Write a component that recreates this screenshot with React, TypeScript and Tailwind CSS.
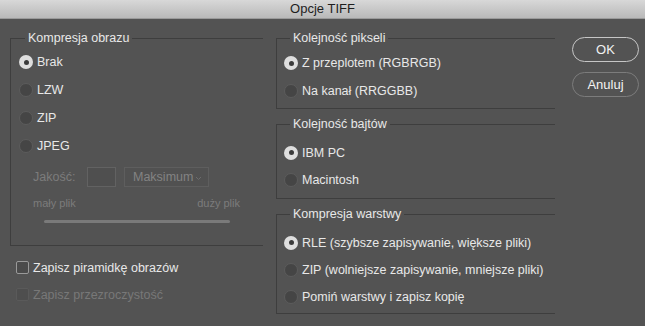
import React from "react";

function Radio({ checked, label, h = "h-[28px]" }: { checked?: boolean; label: string; h?: string }) {
  return (
    <div className={`${h} flex items-center gap-[4px]`}>
      {checked ? (
        <span className="w-[14px] h-[14px] rounded-full bg-[#dedede] flex items-center justify-center shrink-0">
          <span className="w-[5px] h-[5px] rounded-full bg-[#3a3a3a]" />
        </span>
      ) : (
        <span className="w-[14px] h-[14px] rounded-full bg-[#454545] border border-[#5c5c5c] shrink-0" />
      )}
      <span className="text-[12.5px] text-[#e8e8e8] leading-[16px]">{label}</span>
    </div>
  );
}

export default function App() {
  return (
    <div className="w-[645px] h-[326px] bg-[#535353] flex flex-col overflow-hidden font-['Liberation_Sans',Arial,sans-serif]">
      <div className="h-[19px] shrink-0 border-b border-[#9a9a9a] bg-gradient-to-b from-[#d8d8d8] to-[#b9b9b9] flex items-center justify-center text-[13px] text-[#1e1e1e] leading-[16px]">
        Opcje TIFF
      </div>
      <div className="flex pl-[10px] pt-[11px]">
        {/* left column */}
        <div className="w-[253px] flex flex-col">
          <fieldset className="border-t border-l border-b border-[#3e3e3e] pl-[8px] pt-[2px] pb-[22px]">
            <legend className="ml-[6px] px-[3px] text-[12.5px] leading-[16px] text-[#e8e8e8]">Kompresja obrazu</legend>
            <Radio checked label="Brak" />
            <Radio label="LZW" />
            <Radio label="ZIP" />
            <Radio label="JPEG" />
            <div className="mt-[7px] h-[20px] pl-[14px] flex items-center">
              <span className="w-[54px] text-[12.5px] text-[#7c7c7c] leading-[16px]">Jakość:</span>
              <span className="w-[29px] h-[20px] border border-[#626262] bg-[#4f4f4f]" />
              <span className="ml-[8px] w-[85px] h-[20px] border border-[#5e5e5e] bg-[#515151] flex items-center pl-[8px] pr-[6px] justify-between">
                <span className="text-[12.5px] text-[#838383] leading-[16px]">Maksimum</span>
                <svg width="7" height="5" viewBox="0 0 7 5" className="mt-[2px]">
                  <path d="M1 1 L3.5 3.5 L6 1" stroke="#6c6c6c" strokeWidth="1" fill="none" />
                </svg>
              </span>
            </div>
            <div className="mt-[9px] ml-[14px] w-[207px] h-[14px] flex justify-between items-center text-[11px] leading-[14px] text-[#7c7c7c]">
              <span>mały plik</span>
              <span>duży plik</span>
            </div>
            <div className="mt-[10px] ml-[25px] w-[186px] h-[3px] rounded-full bg-[#7a7a7a]" />
          </fieldset>
          <div className="mt-[8px] pl-[6px]">
            <div className="h-[27px] flex items-center gap-[4px]">
              <span className="w-[13px] h-[13px] rounded-[2px] border border-[#9a9a9a] bg-[#4b4b4b] shrink-0" />
              <span className="text-[12.5px] text-[#e8e8e8] leading-[16px]">Zapisz piramidkę obrazów</span>
            </div>
            <div className="h-[27px] flex items-center gap-[4px]">
              <span className="w-[13px] h-[13px] rounded-[2px] border border-[#5a5a5a] bg-[#4e4e4e] shrink-0" />
              <span className="text-[12.5px] text-[#787878] leading-[16px]">Zapisz przezroczystość</span>
            </div>
          </div>
        </div>

        {/* right column */}
        <div className="ml-[13px] w-[279px] flex flex-col">
          <fieldset className="border-t border-l border-b border-[#3e3e3e] pl-[7px] pt-[3px] pb-[3px]">
            <legend className="ml-[6px] px-[3px] text-[12.5px] leading-[16px] text-[#e8e8e8]">Kolejność pikseli</legend>
            <Radio checked label="Z przeplotem (RGBRGB)" />
            <Radio label="Na kanał (RRGGBB)" />
          </fieldset>
          <fieldset className="mt-[7px] border-t border-l border-b border-[#3e3e3e] pl-[7px] pt-[7px] pb-[5px]">
            <legend className="ml-[6px] px-[3px] text-[12.5px] leading-[16px] text-[#e8e8e8]">Kolejność bajtów</legend>
            <Radio checked label="IBM PC" h="h-[27px]" />
            <Radio label="Macintosh" h="h-[27px]" />
          </fieldset>
          <fieldset className="mt-[7px] border-t border-l border-b border-[#3e3e3e] pl-[7px] pt-[7px] pb-[3px]">
            <legend className="ml-[6px] px-[3px] text-[12.5px] leading-[16px] text-[#e8e8e8]">Kompresja warstwy</legend>
            <Radio checked label="RLE (szybsze zapisywanie, większe pliki)" h="h-[27px]" />
            <Radio label="ZIP (wolniejsze zapisywanie, mniejsze pliki)" h="h-[27px]" />
            <Radio label="Pomiń warstwy i zapisz kopię" h="h-[27px]" />
          </fieldset>
        </div>

        {/* buttons */}
        <div className="ml-[17px] w-[67px] flex flex-col mt-[7px]">
          <button className="h-[25px] w-[67px] rounded-full border border-[#c6c6c6] text-[13px] leading-[16px] text-[#f2f2f2] flex items-center justify-center">
            OK
          </button>
          <button className="mt-[10px] h-[25px] w-[67px] rounded-full border border-[#7c7c7c] text-[13px] leading-[16px] text-[#f2f2f2] flex items-center justify-center">
            Anuluj
          </button>
        </div>
      </div>
    </div>
  );
}
